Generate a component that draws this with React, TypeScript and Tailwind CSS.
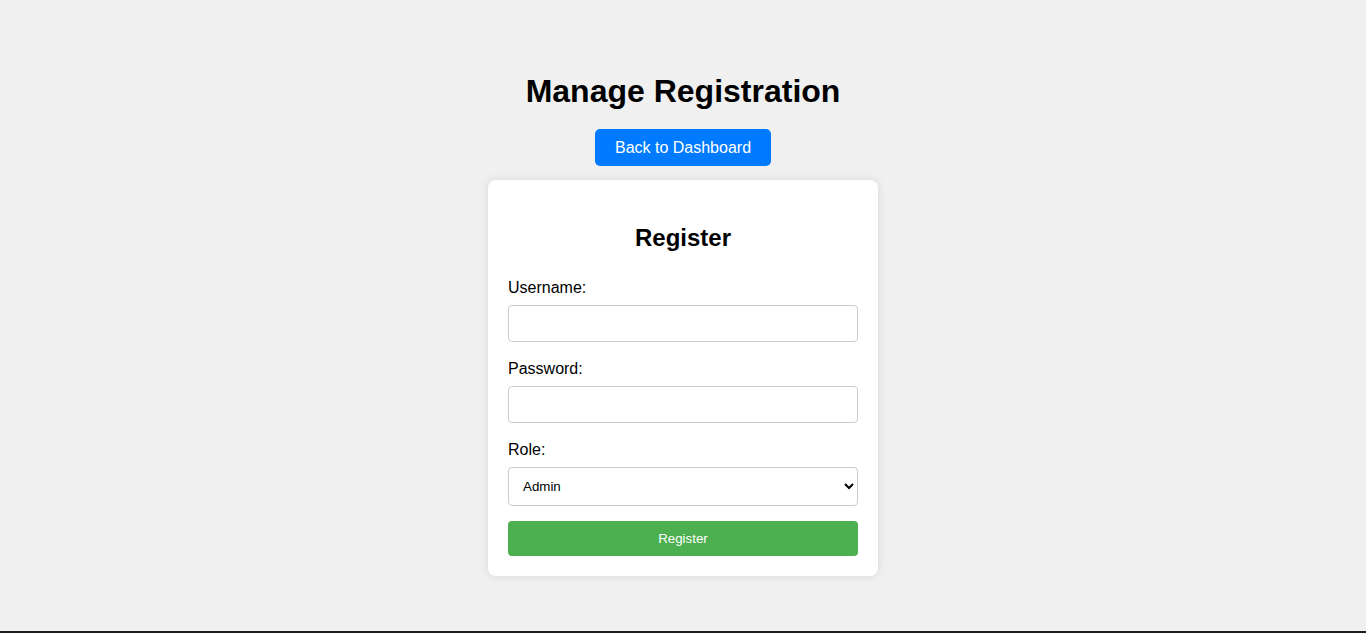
export default function App() {
  return (
    <div className="min-h-screen flex flex-col bg-[#f0f0f0] text-black font-['Liberation_Sans',Arial,sans-serif]">
      <main className="flex-1 flex flex-col items-center pt-[73px]">
        <h1 className="text-[32px] leading-[37px] font-bold">Manage Registration</h1>

        <button className="mt-[19px] h-[37px] px-5 rounded-[5px] bg-[#007bff] text-white text-base">
          Back to Dashboard
        </button>

        <form
          className="mt-[14px] w-[390px] bg-white rounded-lg shadow-[0_0_10px_rgba(0,0,0,0.1)] px-5 pb-5 pt-[44px]"
          onSubmit={(e) => e.preventDefault()}
        >
          <h2 className="text-2xl leading-[28px] font-bold text-center">Register</h2>

          <label className="block mt-[27px] text-base leading-[18px]">Username:</label>
          <input
            type="text"
            className="block w-full mt-[8px] h-[37px] px-[10px] border border-[#ccc] rounded-[4px] text-[13.33px]"
          />

          <label className="block mt-[18px] text-base leading-[18px]">Password:</label>
          <input
            type="password"
            className="block w-full mt-[8px] h-[37px] px-[10px] border border-[#ccc] rounded-[4px] text-[13.33px]"
          />

          <label className="block mt-[18px] text-base leading-[18px]">Role:</label>
          <select className="block w-full mt-[8px] h-[39px] px-[10px] border border-[#ccc] rounded-[4px] text-[13.33px] bg-white">
            <option>Admin</option>
            <option>User</option>
          </select>

          <button
            type="submit"
            className="block w-full mt-[15px] h-[35px] rounded-[4px] bg-[#4caf50] text-white text-[13.33px]"
          >
            Register
          </button>
        </form>
      </main>
      <div className="h-[2px] bg-[#1c1c1c]" />
    </div>
  );
}
